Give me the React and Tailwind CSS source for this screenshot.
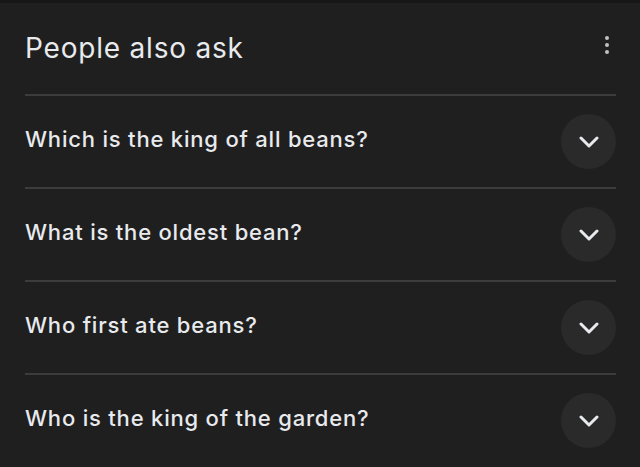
import React from "react";

const questions = [
  "Which is the king of all beans?",
  "What is the oldest bean?",
  "Who first ate beans?",
  "Who is the king of the garden?",
];

function Chevron() {
  return (
    <svg width="20" height="12" viewBox="0 0 20 12" fill="none">
      <path d="M2 2 L10 10 L18 2" stroke="#e8eaed" strokeWidth="3" strokeLinecap="round" strokeLinejoin="round" />
    </svg>
  );
}

export default function App() {
  return (
    <div
      className="w-[640px] h-[467px] overflow-hidden bg-[#1f1f1f] text-[#e8eaed] border-t-[3px] border-[#171717]"
      style={{ fontFamily: "Inter, 'Open Sans', sans-serif" }}
    >
      <div className="pl-[25px] pr-[24px]">
        <div className="h-[91px] flex items-center justify-between">
          <h2 className="text-[28px] leading-none tracking-[0.8px] mt-[-2px]">People also ask</h2>
          <div className="flex flex-col gap-[3px] mr-[7px] mt-[-8px]">
            <span className="w-[4px] h-[4px] rounded-full bg-[#bdc1c6]" />
            <span className="w-[4px] h-[4px] rounded-full bg-[#bdc1c6]" />
            <span className="w-[4px] h-[4px] rounded-full bg-[#bdc1c6]" />
          </div>
        </div>
        {questions.map((q) => (
          <div key={q} className="h-[93px] border-t-[2px] border-[#3c3c3c] flex items-center justify-between">
            <span className="text-[22px] leading-none tracking-[0.8px] font-medium mt-[-6px]">{q}</span>
            <div className="w-[55px] h-[55px] rounded-full bg-[#2a2a2b] flex items-center justify-center">
              <Chevron />
            </div>
          </div>
        ))}
      </div>
    </div>
  );
}
